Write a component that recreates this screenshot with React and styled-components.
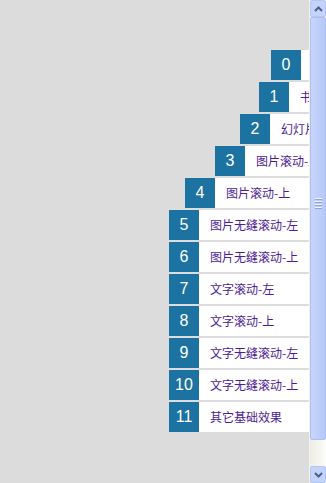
import React from 'react'
import styled, { createGlobalStyle } from 'styled-components'

const GlobalStyle = createGlobalStyle`
  html, body {
    margin: 0;
    padding: 0;
    height: 100%;
    overflow: hidden;
    background: #dcdcdc;
  }
  #root { height: 100%; }
`

const items = [
  { num: 0, label: '书签效果', shift: 102 },
  { num: 1, label: '书签效果', shift: 90 },
  { num: 2, label: '幻灯片效果', shift: 71 },
  { num: 3, label: '图片滚动-左', shift: 46 },
  { num: 4, label: '图片滚动-上', shift: 16 },
  { num: 5, label: '图片无缝滚动-左', shift: 0 },
  { num: 6, label: '图片无缝滚动-上', shift: 0 },
  { num: 7, label: '文字滚动-左', shift: 0 },
  { num: 8, label: '文字滚动-上', shift: 0 },
  { num: 9, label: '文字无缝滚动-左', shift: 0 },
  { num: 10, label: '文字无缝滚动-上', shift: 0 },
  { num: 11, label: '其它基础效果', shift: 0 },
]

function App() {
  return (
    <>
      <GlobalStyle />
      <Page>
        <Main>
          <Menu>
            {items.map(item => (
              <Item key={item.num} $shift={item.shift}>
                <Num>{item.num}</Num>
                <Label>{item.label}</Label>
              </Item>
            ))}
          </Menu>
        </Main>
        <ScrollBar>
          <ArrowButton>
            <svg width="9" height="6" viewBox="0 0 9 6">
              <path d="M1 5 L4.5 1.5 L8 5" fill="none" stroke="#4d6185" strokeWidth="2" />
            </svg>
          </ArrowButton>
          <Thumb>
            <Grip>
              <span /><span /><span /><span />
            </Grip>
          </Thumb>
          <Track />
          <ArrowButton>
            <svg width="9" height="6" viewBox="0 0 9 6">
              <path d="M1 1 L4.5 4.5 L8 1" fill="none" stroke="#4d6185" strokeWidth="2" />
            </svg>
          </ArrowButton>
        </ScrollBar>
      </Page>
    </>
  )
}
export default App

const Page = styled.div`
  display: flex;
  height: 100%;
`

const Main = styled.div`
  flex: 1;
  overflow: hidden;
`

const Menu = styled.ul`
  list-style: none;
  margin: 0;
  padding: 50px 0 0;
  display: flex;
  flex-direction: column;
  align-items: flex-end;
  gap: 2px;
`

const Item = styled.li`
  display: flex;
  width: 140px;
  height: 30px;
  flex-shrink: 0;
  background: #fff;
  transform: translateX(${p => p.$shift}px);
`

const Num = styled.div`
  width: 30px;
  height: 30px;
  background: #1c72a0;
  color: #fff;
  font: 16px/30px "Liberation Sans", Arial, sans-serif;
  text-align: center;
  flex-shrink: 0;
`

const Label = styled.div`
  padding-left: 11px;
  font: 12px/30px "Noto Sans CJK SC", "Liberation Sans", sans-serif;
  color: #4b1c97;
  white-space: nowrap;
`

const ScrollBar = styled.div`
  width: 17px;
  flex-shrink: 0;
  display: flex;
  flex-direction: column;
  background: linear-gradient(to right, #eeede5, #fbfbf8);
  border-left: 1px solid #f3f3ee;
  box-sizing: border-box;
`

const ArrowButton = styled.div`
  height: 17px;
  flex-shrink: 0;
  display: flex;
  align-items: center;
  justify-content: center;
  background: #c3d3fc;
  border: 1px solid #b4c6f2;
  border-radius: 2px;
  box-sizing: border-box;
  svg { display: block; }
`

const Thumb = styled.div`
  height: 423px;
  flex-shrink: 0;
  display: flex;
  flex-direction: column;
  align-items: center;
  justify-content: center;
  background: linear-gradient(to right, #c8d6fc, #bccdfa 60%, #b6c8f8);
  border: 1px solid #aebfee;
  border-radius: 2px;
  box-sizing: border-box;
`

const Grip = styled.div`
  display: flex;
  flex-direction: column;
  gap: 1px;
  margin-bottom: 50px;
  span {
    display: block;
    width: 7px;
    height: 1px;
    background: #eef3ff;
    border-bottom: 1px solid #8ca3dc;
  }
`

const Track = styled.div`
  flex: 1;
`
